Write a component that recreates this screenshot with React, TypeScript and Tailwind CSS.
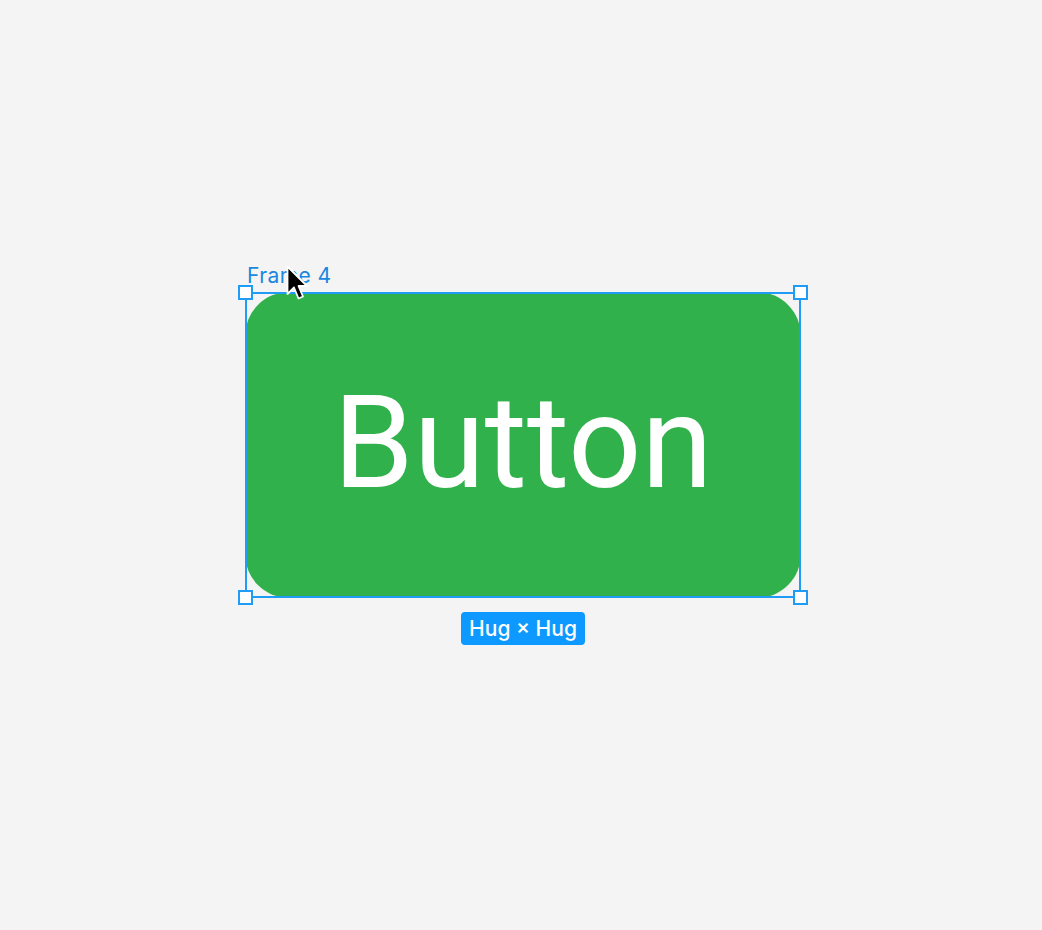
export default function App() {
  return (
    <div className="min-h-screen w-full bg-[#f4f4f4] flex flex-col items-center pt-[292px] pl-[4px] font-['Inter',sans-serif]">
      <div className="relative">
        <div className="w-[556px] h-[306px] rounded-[44px] bg-[#31b14b] flex items-center justify-center">
          <span className="text-white text-[129px] leading-none font-['Roboto',sans-serif] pb-[6px]">Button</span>
        </div>

        {/* selection outline */}
        <div className="absolute inset-0 border-2 border-[#1e9cf6] pointer-events-none" />

        {/* corner handles */}
        <div className="absolute -left-[7px] -top-[7px] w-[15px] h-[15px] bg-white border-2 border-[#1e9cf6]" />
        <div className="absolute -right-[7px] -top-[7px] w-[15px] h-[15px] bg-white border-2 border-[#1e9cf6]" />
        <div className="absolute -left-[7px] -bottom-[7px] w-[15px] h-[15px] bg-white border-2 border-[#1e9cf6]" />
        <div className="absolute -right-[7px] -bottom-[7px] w-[15px] h-[15px] bg-white border-2 border-[#1e9cf6]" />

        {/* frame label */}
        <div className="absolute left-[2px] -top-[28px] text-[21px] leading-6 text-[#1a87e0] whitespace-nowrap tracking-[0.4px]">
          Frame 4
        </div>

        {/* cursor */}
        <svg
          className="absolute left-[40px] -top-[27px]"
          width="26"
          height="40"
          viewBox="0 0 26 40"
        >
          <path
            d="M2.5 1.5 L2.5 29 L9 22.5 L13.5 33.5 L18 31.5 L13.5 21 L22 21 Z"
            fill="#000"
            stroke="#fff"
            strokeWidth="1.8"
            strokeLinejoin="round"
          />
        </svg>
      </div>

      <div className="mt-[14px] h-[33px] px-[8px] rounded-[4px] bg-[#0d99ff] flex items-center text-white text-[21px] font-medium whitespace-nowrap">
        Hug × Hug
      </div>
    </div>
  );
}
